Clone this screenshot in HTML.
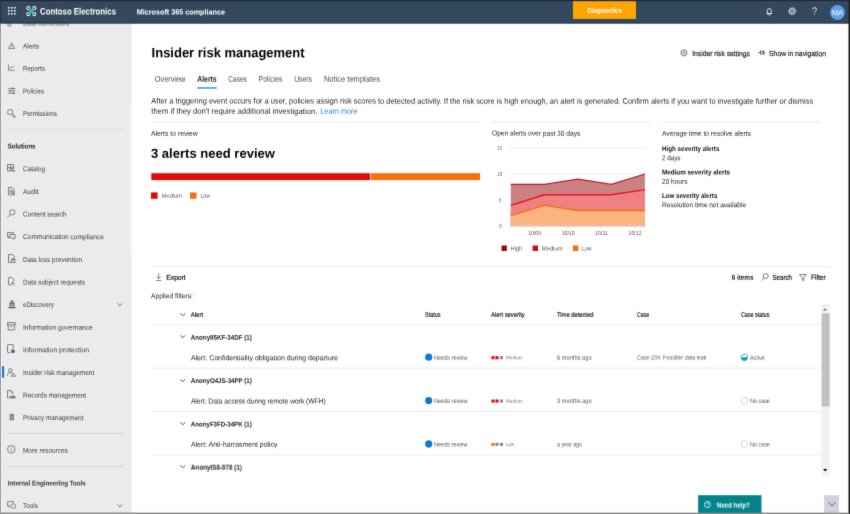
<!DOCTYPE html>
<html><head><meta charset="utf-8"><title>Insider risk management</title>
<style>
html,body{margin:0;padding:0;background:#fff;}
body{position:relative;width:850px;height:514px;overflow:hidden;font-family:"Liberation Sans",sans-serif;}
#root{position:absolute;left:0;top:0;width:850px;height:514px;background:#fff;box-shadow:0 0 0 6px #fff;filter:url(#soft);}
.t{position:absolute;left:0;top:0;white-space:nowrap;transform-origin:0 0;display:block;}
.a{position:absolute;}
svg{overflow:visible;}

</style></head>
<body>
<svg width="0" height="0" style="position:absolute"><filter id="soft" x="0" y="0" width="100%" height="100%" color-interpolation-filters="sRGB"><feConvolveMatrix order="3" kernelMatrix="0.0100 0.0800 0.0100 0.0800 0.6400 0.0800 0.0100 0.0800 0.0100" divisor="1" edgeMode="duplicate" preserveAlpha="false"/></filter></svg>
<div id="root">
<!-- sidebar -->
<svg class="a" style="left:0;top:0" width="850" height="514"><rect x="-3" y="23" width="134.7" height="495" fill="#ebebeb"/>
<rect x="1" y="23" width="1.2" height="495" fill="#f3f3f3"/></svg>
<!-- data connectors partial icon -->
<svg class="a" style="left:6.04px;top:18.30px" width="6.72" height="8.40" viewBox="0 0 8 10" fill="none" stroke="#5a5a5a" stroke-width="1"><circle cx="4" cy="8.2" r="1.7"/><path d="M4 0v6.4"/></svg>
<!-- header -->
<svg class="a" style="left:0;top:0" width="850" height="514"><rect x="-3" y="-3" width="856" height="26.5" fill="#34495e"/>
<rect x="-3" y="21.8" width="856" height="1.7" fill="#2e4155"/></svg>
<!-- waffle -->
<svg class="a" style="left:7.6px;top:7.2px" width="7.7" height="7.7" viewBox="0 0 7.7 7.7" fill="#fff"><rect x="0" y="0" width="1.6" height="1.6"/><rect x="3" y="0" width="1.6" height="1.6"/><rect x="6" y="0" width="1.6" height="1.6"/><rect x="0" y="3" width="1.6" height="1.6"/><rect x="3" y="3" width="1.6" height="1.6"/><rect x="6" y="3" width="1.6" height="1.6"/><rect x="0" y="6" width="1.6" height="1.6"/><rect x="3" y="6" width="1.6" height="1.6"/><rect x="6" y="6" width="1.6" height="1.6"/></svg>
<!-- contoso logo -->
<svg class="a" style="left:26.1px;top:6px" width="10.6" height="10.2" viewBox="0 0 11 11" fill="none"><g stroke="#fff" stroke-width="1.1"><circle cx="2.3" cy="2.3" r="1.7"/><circle cx="8.7" cy="2.3" r="1.7"/><circle cx="2.3" cy="8.7" r="1.7"/><circle cx="8.7" cy="8.7" r="1.7"/></g><path d="M3.2 3.2L7.8 7.8M7.8 3.2L3.2 7.8" stroke="#1fc8c8" stroke-width="2"/><circle cx="5.5" cy="5.5" r="1.6" fill="#1fc8c8"/></svg>
<!-- diagnostics -->
<div class="a" style="left:573.3px;top:0.9px;width:63.2px;height:17.9px;background:#ffa500;box-shadow:0.4px 0.5px 0 0 #1f4f80"></div>
<!-- bell -->
<svg class="a" style="left:766.4px;top:7.5px" width="6.6" height="7.6" viewBox="0 0 8 9" fill="none" stroke="#fff" stroke-width="1"><path d="M1.6 6.6V3.2a2.4 2.6 0 0 1 4.8 0v3.4zM0.8 6.8h6.4M3.1 8.5h1.8"/></svg>
<!-- gear -->
<svg class="a" style="left:788px;top:7.1px" width="8.4" height="8.4" viewBox="0 0 10 10" fill="none" stroke="#fff"><circle cx="5" cy="5" r="3.5" stroke-width="1.05"/><circle cx="5" cy="5" r="4.2" stroke-width="0.9" stroke-dasharray="1.3 2"/><circle cx="5" cy="5" r="1.35" stroke-width="0.85"/></svg>
<!-- ? -->
<svg class="a" style="left:812px;top:7.2px" width="5.2" height="8.8" viewBox="0 0 6 10" fill="none" stroke="#fff" stroke-width="1.05"><path d="M0.9 2.7a2.1 2.1 0 0 1 4.2 0c0 1.7-2.1 1.8-2.1 3.8"/><circle cx="3" cy="8.7" r="0.6" fill="#fff" stroke="none"/></svg>
<!-- avatar -->
<div class="a" style="left:829.7px;top:5px;width:15px;height:15px;border-radius:50%;background:#5b9fe6"></div>

<!-- sidebar dividers -->
<svg class="a" style="left:0;top:0" width="850" height="514"><rect x="7.8" y="129" width="116" height="1" fill="#dedede"/>
<rect x="7.8" y="432.9" width="116" height="1" fill="#d8d8d8"/>
<rect x="7.8" y="465.8" width="116" height="1" fill="#d8d8d8"/></svg>
<!-- selected indicator -->
<svg class="a" style="left:0;top:0" width="850" height="514"><rect x="2" y="366.2" width="2.1" height="11.4" fill="#1a73d9"/></svg>
<!-- sidebar scrollbar hint -->
<svg class="a" style="left:0;top:0" width="850" height="514"><rect x="129.8" y="104" width="2" height="150" fill="#f3f3f3"/></svg>

<svg class="a" style="left:7.91px;top:41.71px" width="7.38" height="7.38" viewBox="0 0 9 9" fill="none" stroke="#5a5a5a" stroke-width="0.85"><path d="M4.5 0.8L8.3 8H0.7z" stroke-linejoin="round"/><path d="M4.5 3.3v2.5M4.5 6.6v0.5"/></svg>
<svg class="a" style="left:7.91px;top:64.11px" width="7.38" height="7.38" viewBox="0 0 9 9" fill="none" stroke="#5a5a5a" stroke-width="0.85"><path d="M0.6 0.5V7.6H8.5"/><path d="M1.8 5.6L4 3.6L5.2 4.6L7.8 2.2"/></svg>
<svg class="a" style="left:7.73px;top:86.53px" width="7.74" height="7.74" viewBox="0 0 9 9" fill="none" stroke="#5a5a5a" stroke-width="0.85"><path d="M0.3 1.8H8.6M0.3 4.5H8.6M0.3 7.2H8.6"/><path d="M5.6 0.7V2.9M2.6 3.4V5.6M6.2 6.1V8.3" stroke-width="1.2"/></svg>
<svg class="a" style="left:7.30px;top:108.80px" width="8.60" height="8.60" viewBox="0 0 10 10" fill="none" stroke="#5a5a5a" stroke-width="0.85"><circle cx="3.6" cy="3.6" r="3"/><path d="M5.8 5.6L9.4 8.4V9.6H7.8L7 8.2H6.2"/></svg>
<svg class="a" style="left:7.20px;top:163.90px" width="8.80" height="8.80" viewBox="0 0 10 10" fill="none" stroke="#5a5a5a" stroke-width="0.85"><path d="M0.6 0.6H7.6V5.2H5.2V7.8H0.6zM4.1 0.6V7.8M0.6 4.2H7.6M7.6 6.4V9.4M6.1 7.9H9.1"/></svg>
<svg class="a" style="left:7.64px;top:186.50px" width="7.92" height="8.80" viewBox="0 0 9 10" fill="none" stroke="#5a5a5a" stroke-width="0.85"><path d="M0.6 0.6H4.8L6.8 2.6V9H0.6z"/><path d="M2 3.6H5M2 5.2H4M2 6.8H3.6"/><circle cx="5.3" cy="6.2" r="1.2"/><path d="M6.2 7.2L8 9.2"/></svg>
<svg class="a" style="left:7.20px;top:209.20px" width="8.80" height="8.80" viewBox="0 0 10 10" fill="none" stroke="#5a5a5a" stroke-width="0.85"><circle cx="6" cy="3.8" r="3"/><path d="M3.8 6.2L0.5 9.5"/></svg>
<svg class="a" style="left:7.20px;top:232.14px" width="8.80" height="7.92" viewBox="0 0 10 9" fill="none" stroke="#5a5a5a" stroke-width="0.85"><path d="M7.2 2.6V0.7H0.6V5.2H1.6V6.8L3 5.2" stroke-linejoin="round"/><path d="M3.2 2.9H9.2V6.8H8V8.2L6.4 6.8H3.2z" stroke-linejoin="round"/></svg>
<svg class="a" style="left:7.88px;top:254.25px" width="7.44" height="9.30" viewBox="0 0 8 10" fill="none" stroke="#5a5a5a" stroke-width="0.85"><path d="M7 4V2.8L4.8 0.6H0.6V9H3"/><rect x="4" y="6" width="3.4" height="3"/><path d="M4.8 6V5.2a0.9 0.9 0 0 1 1.8 0V6"/></svg>
<svg class="a" style="left:8.08px;top:277.00px" width="7.04" height="8.80" viewBox="0 0 8 10" fill="none" stroke="#5a5a5a" stroke-width="0.85"><path d="M6.6 5V2.8L4.4 0.6H0.6V9H4"/><circle cx="5.2" cy="7" r="1.2"/><path d="M6 8L7.4 9.5"/></svg>
<svg class="a" style="left:7.64px;top:299.60px" width="7.92" height="8.80" viewBox="0 0 9 10" fill="none" stroke="#5a5a5a" stroke-width="0.85"><g fill="#5a5a5a" stroke="none"><path d="M4.5 0.1L6.4 1.6H2.6zM2.4 2H6.6V3.1H2.4zM1.2 3.6H7.8V4.7H1.2zM1.7 5.1H3V7.6H1.7zM3.85 5.1H5.15V7.6H3.85zM6 5.1H7.3V7.6H6zM0.4 8H8.6V9.4H0.4z"/></g></svg>
<svg class="a" style="left:7.20px;top:322.30px" width="8.80" height="8.80" viewBox="0 0 10 10" fill="none" stroke="#5a5a5a" stroke-width="0.85"><rect x="0.6" y="0.8" width="8.8" height="2.4"/><path d="M1.4 3.2V9H8.6V3.2M3.6 5.2H6.4"/></svg>
<svg class="a" style="left:7.28px;top:344.40px" width="8.64" height="9.60" viewBox="0 0 9 10" fill="none" stroke="#5a5a5a" stroke-width="0.85"><path d="M6.6 4.2V1.4Q6.6 0.6 5.8 0.6H1.4Q0.6 0.6 0.6 1.4V8.2Q0.6 9 1.4 9H3.4"/><rect x="4.6" y="6.5" width="3.1" height="2.6" fill="#5a5a5a" stroke-width="0.5"/><path d="M5.3 6.4V5.7a0.85 0.85 0 0 1 1.7 0V6.4" stroke-width="0.7"/></svg>
<svg class="a" style="left:7.20px;top:367.60px" width="8.80" height="8.80" viewBox="0 0 10 10" fill="none" stroke="#5a5a5a" stroke-width="0.85"><circle cx="3.8" cy="2.6" r="2"/><path d="M0.5 8.8C0.5 6.4 2 5.2 3.8 5.2c0.8 0 1.4 0.2 2 0.6"/><path d="M7.2 5.6L9.6 9.4H4.8z" stroke-linejoin="round"/></svg>
<svg class="a" style="left:7.20px;top:390.20px" width="8.80" height="8.80" viewBox="0 0 10 10" fill="none" stroke="#5a5a5a" stroke-width="0.85"><path d="M6.4 4.8V2.6L4.4 0.6H0.6V9H2.6"/><path d="M4.4 0.8V2.6H6.2" stroke-width="0.6"/><path d="M3.6 6.9h5.6v2.3H3.6z" fill="#5a5a5a" stroke-width="0.4"/><path d="M5.4 6.9v2.3M7.3 6.9v2.3" stroke="#ebebeb" stroke-width="0.45"/></svg>
<svg class="a" style="left:8.80px;top:413.10px" width="5.60" height="8.00" viewBox="0 0 7 10" fill="none" stroke="#5a5a5a" stroke-width="0.85"><rect x="0.8" y="0.8" width="5.4" height="8.4" rx="1.2" fill="#777" stroke="none"/><g stroke="#ebebeb" stroke-width="0.45"><path d="M1.6 2.6H5.4M1.6 4.2H5.4M1.6 5.8H5.4M1.6 7.4H5.4"/></g></svg>
<svg class="a" style="left:7.30px;top:445.40px" width="8.60" height="8.60" viewBox="0 0 10 10" fill="none" stroke="#5a5a5a" stroke-width="0.85"><circle cx="5" cy="5" r="4.4"/><path d="M5 4.4V7.4M5 2.6V3.3"/></svg>
<svg class="a" style="left:6.76px;top:501.14px" width="9.68" height="7.92" viewBox="0 0 11 9" fill="none" stroke="#5a5a5a" stroke-width="0.85"><path d="M3.6 5.6H0.6V0.8H7.4V2.2M2 5.6V7.4"/><circle cx="7.2" cy="5.8" r="2.6"/></svg>
<svg class="a" style="left:117.3px;top:302.70px" width="5.6" height="3.4" viewBox="0 0 7 4" fill="none" stroke="#5a5a5a" stroke-width="1"><path d="M0.4 0.4L3.5 3.4L6.6 0.4"/></svg>
<svg class="a" style="left:117.3px;top:503.80px" width="5.6" height="3.4" viewBox="0 0 7 4" fill="none" stroke="#5a5a5a" stroke-width="1"><path d="M0.4 0.4L3.5 3.4L6.6 0.4"/></svg>
<!-- tabs underline -->
<svg class="a" style="left:0;top:0" width="850" height="514"><rect x="197.2" y="87.2" width="19.5" height="1.5" fill="#3a96dd"/></svg>
<!-- settings gear + pin icons -->
<svg class="a" style="left:680.4px;top:49.1px" width="7.8" height="7.8" viewBox="0 0 10 10" fill="none" stroke="#555"><circle cx="5" cy="5" r="3.6" stroke-width="0.9"/><circle cx="5" cy="5" r="4.3" stroke-width="0.8" stroke-dasharray="1.3 2.08"/><circle cx="5" cy="5" r="1.5" stroke-width="0.8"/></svg>
<svg class="a" style="left:757.8px;top:50.2px" width="7.6" height="5.2" viewBox="0 0 9 6" fill="none" stroke="#444" stroke-width="0.95"><path d="M0.2 3H3M3 0.8V5.2M3 1.5H6.6V4.5H3M6.6 0.6V5.4M6.6 3H8.8"/></svg>

<!-- section dividers -->
<svg class="a" style="left:0;top:0" width="850" height="514"><rect x="151" y="121.7" width="329" height="1" fill="#e9e9e9"/>
<rect x="492" y="121.7" width="158.6" height="1" fill="#e9e9e9"/>
<rect x="662" y="121.7" width="159" height="1" fill="#e9e9e9"/>
<rect x="151" y="266" width="678.5" height="1" fill="#e9e9e9"/></svg>

<!-- bar -->
<svg class="a" style="left:0;top:0" width="850" height="514"><rect x="151.3" y="173.2" width="218.9" height="6.9" fill="#e30909"/>
<rect x="371" y="173.2" width="109" height="6.9" fill="#f7700a"/>
<rect x="151" y="192.4" width="6.6" height="6.4" fill="#e30909"/>
<rect x="190" y="192.4" width="6.5" height="6.4" fill="#f7700a"/></svg>

<!-- chart -->
<svg class="a" style="left:0;top:0" width="850" height="514" viewBox="0 0 850 514">
<g stroke="#eeeeee" stroke-width="1"><path d="M509.4 147.7H646.4M509.4 174H646.4M509.4 200.1H646.4"/></g>
<path d="M510.8 226.2V184.4L544.3 184.4L577.9 179.2L611.4 184.4L644.9 174V226.2z" fill="#cd8081"/>
<path d="M510.8 226.2V205.3L544.3 194.8L577.9 194.8L611.4 194.8L644.9 189.6V226.2z" fill="#f08181"/>
<path d="M510.8 226.2V215.7L544.3 205.3L577.9 210.5L611.4 210.5L644.9 210.5V226.2z" fill="#f9b482"/>
<path d="M510.8 184.4L544.3 184.4L577.9 179.2L611.4 184.4L644.9 174" fill="none" stroke="#a4262c" stroke-width="1.3"/>
<path d="M510.8 205.3L544.3 194.8L577.9 194.8L611.4 194.8L644.9 189.6" fill="none" stroke="#e81123" stroke-width="1.4"/>
<path d="M510.8 215.7L544.3 205.3L577.9 210.5L611.4 210.5L644.9 210.5" fill="none" stroke="#f7700a" stroke-width="1.3"/>
<path d="M508.7 226.2H646.2" stroke="#d8d8ea" stroke-width="1"/>
<g stroke="#d8d8ea" stroke-width="0.9"><path d="M534.3 226.2V229M567.8 226.2V229M601.1 226.2V229M634.5 226.2V229"/></g>
<rect x="501.5" y="245.5" width="5.4" height="5.5" fill="#8e0e14"/>
<rect x="532.6" y="245.5" width="5.4" height="5.5" fill="#e30909"/>
<rect x="572.9" y="245.5" width="5.4" height="5.5" fill="#f7700a"/>
</svg>

<!-- toolbar icons -->
<svg class="a" style="left:156px;top:273.2px" width="5.4" height="8.1" viewBox="0 0 6 9" fill="none" stroke="#555" stroke-width="0.85"><path d="M3 0.2V6.2M0.8 4L3 6.3L5.2 4M0.3 8.4H5.7"/></svg>
<svg class="a" style="left:760.9px;top:273.3px" width="7.9" height="7.9" viewBox="0 0 10 10" fill="none" stroke="#555" stroke-width="1"><circle cx="6" cy="3.9" r="3.2"/><path d="M3.7 6.3L0.5 9.5"/></svg>
<svg class="a" style="left:799.4px;top:274.2px" width="7.9" height="7.1" viewBox="0 0 9 8" fill="none" stroke="#555" stroke-width="0.9" stroke-linejoin="round"><path d="M0.5 0.6H8.5L5.4 4.2V7.6L3.6 6.4V4.2z"/></svg>

<!-- table lines -->
<svg class="a" style="left:0;top:0" width="850" height="514"><rect x="151" y="324.2" width="669.6" height="1" fill="#ededed"/>
<rect x="151" y="367.6" width="669.6" height="1" fill="#ededed"/>
<rect x="151" y="410.9" width="669.6" height="1" fill="#ededed"/>
<rect x="151" y="454.4" width="669.6" height="1" fill="#ededed"/></svg>
<!-- chevrons -->
<svg class="a" style="left:179.8px;top:313px" width="5.6" height="3.2" viewBox="0 0 7 4" fill="none" stroke="#444" stroke-width="1.15"><path d="M0.4 0.4L3.5 3.4L6.6 0.4"/></svg>
<svg class="a" style="left:179.8px;top:335.2px" width="5.6" height="3.2" viewBox="0 0 7 4" fill="none" stroke="#444" stroke-width="1.15"><path d="M0.4 0.4L3.5 3.4L6.6 0.4"/></svg>
<svg class="a" style="left:179.8px;top:378.6px" width="5.6" height="3.2" viewBox="0 0 7 4" fill="none" stroke="#444" stroke-width="1.15"><path d="M0.4 0.4L3.5 3.4L6.6 0.4"/></svg>
<svg class="a" style="left:179.8px;top:421.9px" width="5.6" height="3.2" viewBox="0 0 7 4" fill="none" stroke="#444" stroke-width="1.15"><path d="M0.4 0.4L3.5 3.4L6.6 0.4"/></svg>
<svg class="a" style="left:179.8px;top:465.3px" width="5.6" height="3.2" viewBox="0 0 7 4" fill="none" stroke="#444" stroke-width="1.15"><path d="M0.4 0.4L3.5 3.4L6.6 0.4"/></svg>

<!-- status dots, severity squares, case status icons -->
<svg class="a" style="left:0;top:0" width="850" height="514" viewBox="0 0 850 514">
<circle cx="428.7" cy="357.2" r="3.6" fill="#0f78d4"/>
<circle cx="428.7" cy="400.55" r="3.6" fill="#0f78d4"/>
<circle cx="428.7" cy="443.9" r="3.6" fill="#0f78d4"/>
<g><rect x="491.45" y="356.15" width="3.1" height="3.1" fill="#e30909"/><rect x="495.45" y="356.15" width="3.1" height="3.1" fill="#e30909"/><rect x="499.95" y="356.15" width="3.1" height="3.1" fill="#8a8a8a"/></g>
<g><rect x="491.45" y="399.5" width="3.1" height="3.1" fill="#e30909"/><rect x="495.45" y="399.5" width="3.1" height="3.1" fill="#e30909"/><rect x="499.95" y="399.5" width="3.1" height="3.1" fill="#8a8a8a"/></g>
<g><rect x="491.45" y="442.85" width="3.1" height="3.1" fill="#f7700a"/><rect x="495.45" y="442.85" width="3.1" height="3.1" fill="#8a8a8a"/><rect x="499.95" y="442.85" width="3.1" height="3.1" fill="#8a8a8a"/></g>
<circle cx="744.4" cy="357.3" r="3.1" fill="#fff" stroke="#1a9fae" stroke-width="0.8"/><path d="M741.0 357.3a3.4 3.4 0 0 0 6.8 0z" fill="#1a9fae"/>
<circle cx="744.4" cy="400.8" r="3.35" fill="#fff" stroke="#c4c4c4" stroke-width="0.7"/>
<circle cx="744.4" cy="444.1" r="3.35" fill="#fff" stroke="#c4c4c4" stroke-width="0.7"/>
</svg>

<!-- table scrollbar -->
<svg class="a" style="left:0;top:0" width="850" height="514"><rect x="821.4" y="304" width="8.3" height="171.4" fill="#f1f1f1"/>
<rect x="821.6" y="313.3" width="8" height="93.1" fill="#c1c1c1"/></svg>
<svg class="a" style="left:823.3px;top:307.8px" width="4" height="2.4" viewBox="0 0 5 3"><path d="M0 3L2.5 0.2L5 3z" fill="#777"/></svg>
<svg class="a" style="left:823.1px;top:468.9px" width="4.4" height="2.6" viewBox="0 0 5 3"><path d="M0 0L2.5 2.8L5 0z" fill="#111"/></svg>

<!-- need help -->
<svg class="a" style="left:0;top:0" width="850" height="514"><rect x="698.1" y="495.2" width="63.4" height="23" fill="#03848c"/></svg>
<svg class="a" style="left:703.6px;top:501px" width="7" height="7" viewBox="0 0 7 7" fill="none" stroke="#fff" stroke-width="0.8"><circle cx="3.5" cy="3.5" r="3.05"/><path d="M2.6 2.7a0.95 0.95 0 0 1 1.9 0c0 0.8-1 0.8-1 1.5M3.5 5.1v0.4" stroke-width="0.7"/></svg>
<!-- bottom-right button -->
<svg class="a" style="left:0;top:0" width="850" height="514"><rect x="824.1" y="495.1" width="14.9" height="17.5" fill="#d3d3d3"/></svg>
<svg class="a" style="left:827.9px;top:502.1px" width="8" height="4.2" viewBox="0 0 8 4.2" fill="none" stroke="#3b8ee0" stroke-width="1.1"><path d="M0.4 0.4L4 3.8L7.6 0.4"/></svg>

<!-- frame borders -->
<svg class="a" style="left:0;top:0" width="850" height="514"><rect x="-3" y="-3" width="856" height="4.2" fill="#1c2a38"/>
<rect x="-3" y="-3" width="4" height="26.5" fill="#243342"/>
<rect x="-3" y="23.5" width="4" height="495" fill="#9a9a9a"/>
<rect x="848.5" y="-3" width="5" height="520" fill="#1d1d1d"/>
<rect x="-3" y="512.6" width="851.5" height="5" fill="#8a8a8a"/></svg>

<span class="t" style="font-size:9.3px;line-height:12.09px;color:#fff;font-weight:700;transform:translate(40px,5.40px) scaleX(0.8406) rotate(0.03deg);">Contoso Electronics</span>
<span class="t" style="font-size:7.6px;line-height:9.88px;color:#fff;font-weight:700;transform:translate(136.7px,7.50px) scaleX(0.9511) rotate(0.03deg);">Microsoft 365 compliance</span>
<span class="t" style="font-size:7.1px;line-height:9.23px;color:#fff;font-weight:700;transform:translate(587.6px,6.70px) scaleX(0.8503) rotate(0.03deg);">Diagnostics</span>
<span class="t" style="font-size:7.5px;line-height:9.75px;color:#fff;transform:translate(832px,8.30px) scaleX(0.9778) rotate(0.03deg);">MA</span>
<span class="t" style="font-size:7.1px;line-height:9.23px;color:#3a3a3a;transform:translate(23px,19.50px) scaleX(0.9002) rotate(0.03deg);clip-path:inset(3.50px 0 0 0);">Data connectors</span>
<span class="t" style="font-size:7.1px;line-height:9.23px;color:#3a3a3a;transform:translate(23px,42.40px) scaleX(0.8930) rotate(0.03deg);">Alerts</span>
<span class="t" style="font-size:7.1px;line-height:9.23px;color:#3a3a3a;transform:translate(23px,64.80px) scaleX(0.8815) rotate(0.03deg);">Reports</span>
<span class="t" style="font-size:7.1px;line-height:9.23px;color:#3a3a3a;transform:translate(23px,87.40px) scaleX(0.8629) rotate(0.03deg);">Policies</span>
<span class="t" style="font-size:7.1px;line-height:9.23px;color:#3a3a3a;transform:translate(23px,110.10px) scaleX(0.8773) rotate(0.03deg);">Permissions</span>
<span class="t" style="font-size:7.1px;line-height:9.23px;color:#3a3a3a;transform:translate(23px,165.30px) scaleX(0.9038) rotate(0.03deg);">Catalog</span>
<span class="t" style="font-size:7.1px;line-height:9.23px;color:#3a3a3a;transform:translate(23px,187.90px) scaleX(0.9646) rotate(0.03deg);">Audit</span>
<span class="t" style="font-size:7.1px;line-height:9.23px;color:#3a3a3a;transform:translate(23px,210.60px) scaleX(0.9083) rotate(0.03deg);">Content search</span>
<span class="t" style="font-size:7.1px;line-height:9.23px;color:#3a3a3a;transform:translate(23px,233.10px) scaleX(0.9284) rotate(0.03deg);">Communication compliance</span>
<span class="t" style="font-size:7.1px;line-height:9.23px;color:#3a3a3a;transform:translate(23px,255.90px) scaleX(0.9154) rotate(0.03deg);">Data loss prevention</span>
<span class="t" style="font-size:7.1px;line-height:9.23px;color:#3a3a3a;transform:translate(23px,278.40px) scaleX(0.9049) rotate(0.03deg);">Data subject requests</span>
<span class="t" style="font-size:7.1px;line-height:9.23px;color:#3a3a3a;transform:translate(23px,301.00px) scaleX(0.8805) rotate(0.03deg);">eDiscovery</span>
<span class="t" style="font-size:7.1px;line-height:9.23px;color:#3a3a3a;transform:translate(23px,323.70px) scaleX(0.9365) rotate(0.03deg);">Information governance</span>
<span class="t" style="font-size:7.1px;line-height:9.23px;color:#3a3a3a;transform:translate(23px,346.20px) scaleX(0.9632) rotate(0.03deg);">Information protection</span>
<span class="t" style="font-size:7.1px;line-height:9.23px;color:#3a3a3a;transform:translate(23px,369.00px) scaleX(0.9180) rotate(0.03deg);">Insider risk management</span>
<span class="t" style="font-size:7.1px;line-height:9.23px;color:#3a3a3a;transform:translate(23px,391.60px) scaleX(0.9041) rotate(0.03deg);">Records management</span>
<span class="t" style="font-size:7.1px;line-height:9.23px;color:#3a3a3a;transform:translate(23px,414.10px) scaleX(0.9079) rotate(0.03deg);">Privacy management</span>
<span class="t" style="font-size:7.1px;line-height:9.23px;color:#3a3a3a;transform:translate(23px,446.70px) scaleX(0.9091) rotate(0.03deg);">More resources</span>
<span class="t" style="font-size:7.1px;line-height:9.23px;color:#3a3a3a;transform:translate(23px,502.10px) scaleX(0.8996) rotate(0.03deg);">Tools</span>
<span class="t" style="font-size:7.1px;line-height:9.23px;color:#222;font-weight:700;transform:translate(7.8px,142.60px) scaleX(0.8568) rotate(0.03deg);">Solutions</span>
<span class="t" style="font-size:7.1px;line-height:9.23px;color:#333;font-weight:700;transform:translate(7.8px,479.40px) scaleX(0.8769) rotate(0.03deg);">Internal Engineering Tools</span>
<span class="t" style="font-size:13.6px;line-height:17.68px;color:#000;font-weight:700;transform:translate(151.6px,44.20px) scaleX(0.9552) rotate(0.03deg);">Insider risk management</span>
<span class="t" style="font-size:8.3px;line-height:10.79px;color:#4a4a4a;transform:translate(154.8px,73.70px) scaleX(0.8821) rotate(0.03deg);">Overview</span>
<span class="t" style="font-size:8.3px;line-height:10.79px;color:#222;font-weight:700;transform:translate(197.2px,73.70px) scaleX(0.8287) rotate(0.03deg);">Alerts</span>
<span class="t" style="font-size:8.3px;line-height:10.79px;color:#4a4a4a;transform:translate(228.3px,73.70px) scaleX(0.7904) rotate(0.03deg);">Cases</span>
<span class="t" style="font-size:8.3px;line-height:10.79px;color:#4a4a4a;transform:translate(258.6px,73.70px) scaleX(0.8358) rotate(0.03deg);">Policies</span>
<span class="t" style="font-size:8.3px;line-height:10.79px;color:#4a4a4a;transform:translate(294.2px,73.70px) scaleX(0.8213) rotate(0.03deg);">Users</span>
<span class="t" style="font-size:8.3px;line-height:10.79px;color:#4a4a4a;transform:translate(323.9px,73.70px) scaleX(0.9078) rotate(0.03deg);">Notice templates</span>
<span class="t" style="font-size:8.1px;line-height:10.53px;color:#1e1e1e;transform:translate(151.3px,96.50px) scaleX(0.9280) rotate(0.03deg);">After a triggering event occurs for a user, policies assign risk scores to detected activity. If the risk score is high enough, an alert is generated. Confirm alerts if you want to investigate further or dismiss</span>
<span class="t" style="font-size:8.1px;line-height:10.53px;color:#1e1e1e;transform:translate(151.3px,106.80px) scaleX(0.9474) rotate(0.03deg);">them if they don't require additional investigation.</span>
<span class="t" style="font-size:8.1px;line-height:10.53px;color:#2b7fc9;transform:translate(320.3px,106.80px) scaleX(0.9012) rotate(0.03deg);">Learn more</span>
<span class="t" style="font-size:7.6px;line-height:9.88px;color:#1e1e1e;transform:translate(692.2px,49.10px) scaleX(0.8892) rotate(0.03deg);-webkit-text-stroke:0.2px;">Insider risk settings</span>
<span class="t" style="font-size:7.6px;line-height:9.88px;color:#1e1e1e;transform:translate(769.1px,49.10px) scaleX(0.8925) rotate(0.03deg);-webkit-text-stroke:0.2px;">Show in navigation</span>
<span class="t" style="font-size:7.1px;line-height:9.23px;color:#222;transform:translate(151px,129.70px) scaleX(0.9608) rotate(0.03deg);">Alerts to review</span>
<span class="t" style="font-size:13px;line-height:16.9px;color:#000;font-weight:700;transform:translate(151px,145.70px) scaleX(1.0026) rotate(0.03deg);">3 alerts need review</span>
<span class="t" style="font-size:6px;line-height:7.8px;color:#5a5a5a;transform:translate(161.8px,192.70px) scaleX(0.9511) rotate(0.03deg);">Medium</span>
<span class="t" style="font-size:6px;line-height:7.8px;color:#5a5a5a;transform:translate(200.4px,192.70px) scaleX(0.8806) rotate(0.03deg);">Low</span>
<span class="t" style="font-size:7.1px;line-height:9.23px;color:#222;transform:translate(492px,129.60px) scaleX(0.9330) rotate(0.03deg);">Open alerts over past 30 days</span>
<span class="t" style="font-size:7.1px;line-height:9.23px;color:#222;transform:translate(662px,129.70px) scaleX(0.9486) rotate(0.03deg);">Average time to resolve alerts</span>
<span class="t" style="font-size:7.1px;line-height:9.23px;color:#111;font-weight:700;transform:translate(662px,144.90px) scaleX(0.8770) rotate(0.03deg);">High severity alerts</span>
<span class="t" style="font-size:7.1px;line-height:9.23px;color:#222;transform:translate(662px,154.20px) scaleX(0.8801) rotate(0.03deg);">2 days</span>
<span class="t" style="font-size:7.1px;line-height:9.23px;color:#111;font-weight:700;transform:translate(662px,168.40px) scaleX(0.8889) rotate(0.03deg);">Medium severity alerts</span>
<span class="t" style="font-size:7.1px;line-height:9.23px;color:#222;transform:translate(662px,177.70px) scaleX(0.9200) rotate(0.03deg);">20 hours</span>
<span class="t" style="font-size:7.1px;line-height:9.23px;color:#111;font-weight:700;transform:translate(662px,191.90px) scaleX(0.8658) rotate(0.03deg);">Low severity alerts</span>
<span class="t" style="font-size:7.1px;line-height:9.23px;color:#222;transform:translate(662px,201.30px) scaleX(0.9272) rotate(0.03deg);">Resolution time not available</span>
<span class="t" style="font-size:5.6px;line-height:7.28px;color:#555;transform:translate(497.3px,144.80px) scaleX(0.7539) rotate(0.03deg);">15</span>
<span class="t" style="font-size:5.6px;line-height:7.28px;color:#555;transform:translate(497.3px,171.00px) scaleX(0.7539) rotate(0.03deg);">10</span>
<span class="t" style="font-size:5.6px;line-height:7.28px;color:#555;transform:translate(499.0px,197.00px) scaleX(0.8000) rotate(0.03deg);">5</span>
<span class="t" style="font-size:5.6px;line-height:7.28px;color:#555;transform:translate(499.2px,222.90px) scaleX(0.8000) rotate(0.03deg);">0</span>
<span class="t" style="font-size:5.6px;line-height:7.28px;color:#555;transform:translate(528.2px,230.00px) scaleX(0.9214) rotate(0.03deg);">10/09</span>
<span class="t" style="font-size:5.6px;line-height:7.28px;color:#555;transform:translate(561.7px,230.00px) scaleX(0.9214) rotate(0.03deg);">10/10</span>
<span class="t" style="font-size:5.6px;line-height:7.28px;color:#555;transform:translate(595.1px,230.00px) scaleX(0.9490) rotate(0.03deg);">10/11</span>
<span class="t" style="font-size:5.6px;line-height:7.28px;color:#555;transform:translate(628.6px,230.00px) scaleX(0.9214) rotate(0.03deg);">10/12</span>
<span class="t" style="font-size:6.2px;line-height:8.06px;color:#555;transform:translate(510.6px,244.60px) scaleX(0.9031) rotate(0.03deg);">High</span>
<span class="t" style="font-size:6.2px;line-height:8.06px;color:#555;transform:translate(541.8px,244.60px) scaleX(0.9402) rotate(0.03deg);">Medium</span>
<span class="t" style="font-size:6.2px;line-height:8.06px;color:#555;transform:translate(582px,244.60px) scaleX(0.8363) rotate(0.03deg);">Low</span>
<span class="t" style="font-size:7px;line-height:9.1px;color:#111;transform:translate(166.3px,272.80px) scaleX(0.9588) rotate(0.03deg);-webkit-text-stroke:0.2px;">Export</span>
<span class="t" style="font-size:7.3px;line-height:9.49px;color:#111;font-weight:700;transform:translate(731.7px,272.70px) scaleX(0.8666) rotate(0.03deg);">6 items</span>
<span class="t" style="font-size:7.2px;line-height:9.36px;color:#111;transform:translate(772.5px,272.70px) scaleX(0.8560) rotate(0.03deg);-webkit-text-stroke:0.2px;">Search</span>
<span class="t" style="font-size:7.2px;line-height:9.36px;color:#111;transform:translate(811px,272.70px) scaleX(0.9259) rotate(0.03deg);-webkit-text-stroke:0.2px;">Filter</span>
<span class="t" style="font-size:7.1px;line-height:9.23px;color:#222;transform:translate(151px,292.20px) scaleX(0.9403) rotate(0.03deg);">Applied filters:</span>
<span class="t" style="font-size:6.3px;line-height:8.19px;color:#1a1a1a;transform:translate(190.8px,310.80px) scaleX(0.9496) rotate(0.03deg);-webkit-text-stroke:0.2px;">Alert</span>
<span class="t" style="font-size:6.3px;line-height:8.19px;color:#1a1a1a;transform:translate(425.1px,310.80px) scaleX(0.8567) rotate(0.03deg);-webkit-text-stroke:0.2px;">Status</span>
<span class="t" style="font-size:6.3px;line-height:8.19px;color:#1a1a1a;transform:translate(491.1px,310.80px) scaleX(0.9229) rotate(0.03deg);-webkit-text-stroke:0.2px;">Alert severity</span>
<span class="t" style="font-size:6.3px;line-height:8.19px;color:#1a1a1a;transform:translate(557px,310.80px) scaleX(0.9175) rotate(0.03deg);-webkit-text-stroke:0.2px;">Time detected</span>
<span class="t" style="font-size:6.3px;line-height:8.19px;color:#1a1a1a;transform:translate(637.1px,310.80px) scaleX(0.8094) rotate(0.03deg);-webkit-text-stroke:0.2px;">Case</span>
<span class="t" style="font-size:6.3px;line-height:8.19px;color:#1a1a1a;transform:translate(740.9px,310.80px) scaleX(0.8602) rotate(0.03deg);-webkit-text-stroke:0.2px;">Case status</span>
<span class="t" style="font-size:6.9px;line-height:8.97px;color:#1a1a1a;font-weight:700;transform:translate(190.8px,333.70px) scaleX(0.9000) rotate(0.03deg);">Anony85KF-34DF (1)</span>
<span class="t" style="font-size:7.3px;line-height:9.49px;color:#1a1a1a;transform:translate(190.9px,353.20px) scaleX(0.9568) rotate(0.03deg);">Alert: Confidentiality obligation during departure</span>
<span class="t" style="font-size:6.3px;line-height:8.19px;color:#555;transform:translate(434px,353.80px) scaleX(0.8806) rotate(0.03deg);">Needs review</span>
<span class="t" style="font-size:5.1px;line-height:6.63px;color:#777;transform:translate(505.9px,354.35px) scaleX(0.9269) rotate(0.03deg);">Medium</span>
<span class="t" style="font-size:6.5px;line-height:8.45px;color:#555;transform:translate(557px,353.80px) scaleX(0.8784) rotate(0.03deg);">6 months ago</span>
<span class="t" style="font-size:6px;line-height:7.8px;color:#555;transform:translate(637.1px,354.50px) scaleX(0.8930) rotate(0.03deg);">Case 234: Possible data leak</span>
<span class="t" style="font-size:6.3px;line-height:8.19px;color:#555;transform:translate(750px,353.80px) scaleX(0.8627) rotate(0.03deg);">Active</span>
<span class="t" style="font-size:6.9px;line-height:8.97px;color:#1a1a1a;font-weight:700;transform:translate(190.8px,377.00px) scaleX(0.8915) rotate(0.03deg);">AnonyO4JS-34PP (1)</span>
<span class="t" style="font-size:7.3px;line-height:9.49px;color:#1a1a1a;transform:translate(190.9px,396.50px) scaleX(0.9164) rotate(0.03deg);">Alert: Data access during remote work (WFH)</span>
<span class="t" style="font-size:6.3px;line-height:8.19px;color:#555;transform:translate(434px,397.10px) scaleX(0.8806) rotate(0.03deg);">Needs review</span>
<span class="t" style="font-size:5.1px;line-height:6.63px;color:#777;transform:translate(505.9px,397.65px) scaleX(0.9269) rotate(0.03deg);">Medium</span>
<span class="t" style="font-size:6.5px;line-height:8.45px;color:#555;transform:translate(557px,397.10px) scaleX(0.8784) rotate(0.03deg);">3 months ago</span>
<span class="t" style="font-size:6.3px;line-height:8.19px;color:#555;transform:translate(750px,397.10px) scaleX(0.8611) rotate(0.03deg);">No case</span>
<span class="t" style="font-size:6.9px;line-height:8.97px;color:#1a1a1a;font-weight:700;transform:translate(190.8px,420.40px) scaleX(0.8901) rotate(0.03deg);">AnonyF3FD-34PK (1)</span>
<span class="t" style="font-size:7.3px;line-height:9.49px;color:#1a1a1a;transform:translate(190.9px,439.80px) scaleX(0.9501) rotate(0.03deg);">Alert: Anti-harrasment policy</span>
<span class="t" style="font-size:6.3px;line-height:8.19px;color:#555;transform:translate(434px,440.40px) scaleX(0.8806) rotate(0.03deg);">Needs review</span>
<span class="t" style="font-size:5.1px;line-height:6.63px;color:#777;transform:translate(505.9px,440.95px) scaleX(0.8868) rotate(0.03deg);">Low</span>
<span class="t" style="font-size:6.5px;line-height:8.45px;color:#555;transform:translate(557px,440.40px) scaleX(0.8138) rotate(0.03deg);">a year ago</span>
<span class="t" style="font-size:6.3px;line-height:8.19px;color:#555;transform:translate(750px,440.40px) scaleX(0.8611) rotate(0.03deg);">No case</span>
<span class="t" style="font-size:6.9px;line-height:8.97px;color:#1a1a1a;font-weight:700;transform:translate(190.8px,463.70px) scaleX(0.9122) rotate(0.03deg);">AnonyIS8-978 (1)</span>
<span class="t" style="font-size:7.2px;line-height:9.36px;color:#fff;font-weight:700;transform:translate(716.8px,500.60px) scaleX(0.8516) rotate(0.03deg);">Need help?</span>
</div>
</body></html>
